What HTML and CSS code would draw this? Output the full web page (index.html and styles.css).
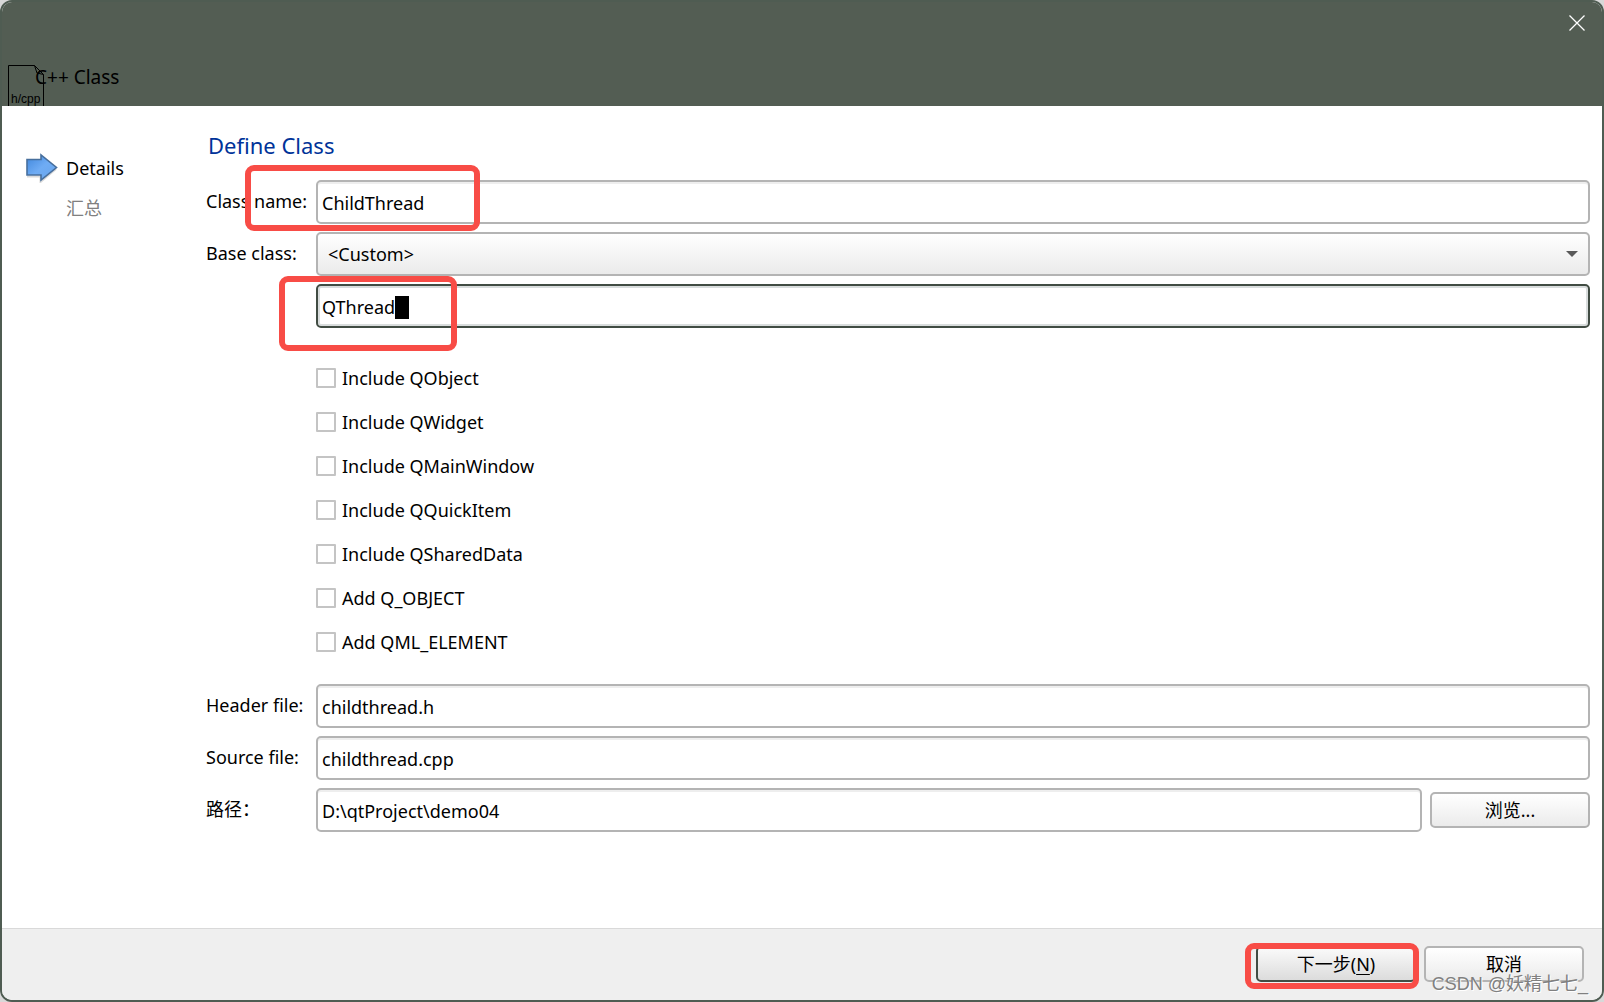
FILE: index.html
```html
<!DOCTYPE html>
<html lang="zh-CN">
<head>
<meta charset="utf-8">
<title>C++ Class</title>
<link rel="stylesheet" href="styles.css">
</head>
<body>
<div class="window">
  <header class="titlebar">
    <div class="brand">
      <svg class="file-icon" width="36" height="41" viewBox="0 0 36 41" fill="none" stroke="#000" aria-hidden="true">
        <path d="M0.5 41V0.5H26.5L35.5 9.5V41M26.5 0.5L29 8L35.5 9.5"/>
        <text class="file-text" x="3" y="38">h/cpp</text>
      </svg>
      <h1 class="title">C++ Class</h1>
    </div>
    <button class="close" type="button" aria-label="Close">
      <svg width="16" height="16" viewBox="0 0 16 16" fill="none" stroke="#fff" stroke-width="1.3"><path d="M0.5 0.5L15.500 15.500M15.500 0.500L0.500 15.500"/></svg>
    </button>
  </header>
  <div class="content">
    <nav class="steps">
      <div class="step">
        <svg width="32" height="30" viewBox="0 0 32 30" aria-hidden="true">
          <defs>
            <linearGradient id="arrow-fill" x1="0" y1="0" x2="1" y2="1"><stop offset="0" stop-color="#3f86dc"/><stop offset=".5" stop-color="#6facf4"/><stop offset="1" stop-color="#69a5ec"/></linearGradient>
          </defs>
          <path d="M1 23.500H14.500V29L30 16" fill="none" stroke="#dadada" stroke-width="2"/>
          <path d="M1 6.500H15V2L30.500 14.500L15 27V22H1Z" fill="url(#arrow-fill)" stroke="#476f9d" stroke-width="1.600"/>
        </svg>
        <span>Details</span>
      </div>
      <div class="step pending"><span>汇总</span></div>
    </nav>
    <main class="page">
      <h2 class="heading">Define Class</h2>
      <form class="form" id="class-form">
        <div class="row">
          <label for="class-name">Class name:</label>
          <input class="text" id="class-name" type="text" value="ChildThread">
          <span class="mark mark-name"></span>
        </div>
        <div class="row">
          <label for="base-class">Base class:</label>
          <div class="combo">
            <select id="base-class"><option>&lt;Custom&gt;</option></select>
            <svg class="chevron" width="12" height="6" viewBox="0 0 12 6"><path d="M0 0H12L6 6Z" fill="#595959"/></svg>
          </div>
        </div>
        <div class="row">
          <span></span>
          <input class="text active" type="text" value="QThread" aria-label="Custom base class">
          <span class="cursor"></span>
          <span class="mark mark-base"></span>
        </div>
        <div class="checks">
          <label><input type="checkbox">Include QObject</label>
          <label><input type="checkbox">Include QWidget</label>
          <label><input type="checkbox">Include QMainWindow</label>
          <label><input type="checkbox">Include QQuickItem</label>
          <label><input type="checkbox">Include QSharedData</label>
          <label><input type="checkbox">Add Q_OBJECT</label>
          <label><input type="checkbox">Add QML_ELEMENT</label>
        </div>
        <div class="row">
          <label for="header-file">Header file:</label>
          <input class="text" id="header-file" type="text" value="childthread.h">
        </div>
        <div class="row">
          <label for="source-file">Source file:</label>
          <input class="text" id="source-file" type="text" value="childthread.cpp">
        </div>
        <div class="row">
          <label for="path">路径：</label>
          <div class="path">
            <input class="text" id="path" type="text" value="D:\qtProject\demo04">
            <button class="button" type="button">浏览...</button>
          </div>
        </div>
      </form>
    </main>
  </div>
  <footer class="actions">
    <div class="next">
      <button class="button default" type="submit" form="class-form">下一步(<u>N</u>)</button>
      <span class="mark mark-next"></span>
    </div>
    <button class="button" type="button">取消</button>
    <span class="watermark">CSDN @妖精七七_</span>
  </footer>
</div>
</body>
</html>
```
FILE: styles.css
```css
* {
  box-sizing: border-box;
}

body {
  margin: 0;
  background: #d8d8d8;
  color: #000;
  font: 18px/24px "Noto Sans", "Noto Sans CJK SC", sans-serif;
}

input,
select,
button {
  margin: 0;
  color: inherit;
  font: inherit;
}

.window {
  display: flex;
  flex-direction: column;
  min-height: 100vh;
  overflow: hidden;
  border: 2px solid #4f5c52;
  border-radius: 12px;
  background: #fff;
}

.titlebar {
  display: flex;
  justify-content: space-between;
  align-items: flex-start;
  height: 104px;
  background: #535d53;
}

.brand {
  display: flex;
  align-self: flex-end;
  padding-left: 6px;
}

.file-icon {
  display: block;
}

.file-text {
  fill: #000;
  stroke: none;
  font-family: "Liberation Sans", sans-serif;
  font-size: 12px;
}

.title {
  margin: 0 0 0 -9px;
  font-size: 19px;
  font-weight: 400;
}

.close {
  display: grid;
  place-items: center;
  width: 50px;
  height: 42px;
  padding: 0;
  border: 0;
  background: none;
}

.content {
  display: flex;
  flex: 1;
}

.steps {
  display: flex;
  flex-direction: column;
  gap: 10px;
  width: 204px;
  padding: 47px 0 0 24px;
}

.step {
  display: flex;
  align-items: center;
  gap: 8px;
  height: 30px;
}

.pending {
  padding-left: 40px;
  color: #808080;
}

.page {
  flex: 1;
  padding: 23px 12px 0 0;
}

.heading {
  margin: 0 0 19px 2px;
  color: #003399;
  font-size: 22px;
  font-weight: 400;
  line-height: 32px;
}

.form {
  display: flex;
  flex-direction: column;
  gap: 8px;
}

.row {
  display: grid;
  grid-template-columns: 110px 1fr;
  position: relative;
}

.row > label {
  padding-top: 9px;
}

.text {
  width: 100%;
  height: 44px;
  padding: 2px 4px 0;
  border: 2px solid #b4b4b4;
  border-radius: 5px;
  outline: 0;
  background: #fff;
  box-shadow: inset 0 2px #eee;
}

.active {
  border-color: #414c43;
  box-shadow: inset 0 0 0 2px #d9dddd;
}

.cursor {
  position: absolute;
  top: 12px;
  left: 189px;
  width: 14px;
  height: 23px;
  background: #000;
}

.combo {
  position: relative;
}

.combo select {
  display: block;
  width: 100%;
  height: 44px;
  padding: 0 10px;
  border: 2px solid #b4b4b4;
  border-radius: 5px;
  appearance: none;
  background: linear-gradient(#fff, #ebebeb);
}

.chevron {
  position: absolute;
  top: 19px;
  right: 12px;
}

.checks {
  display: flex;
  flex-direction: column;
  gap: 20px;
  padding: 30px 0 22px 110px;
}

.checks label {
  display: flex;
  align-items: center;
  align-self: flex-start;
  gap: 6px;
}

.checks input {
  width: 20px;
  height: 20px;
  appearance: none;
  border: 2px solid #c4c4c4;
  border-radius: 1px;
  background: #fff;
}

.path {
  display: flex;
  align-items: flex-start;
  gap: 8px;
}

.path .button {
  margin-top: 4px;
}

.button {
  flex: none;
  width: 160px;
  height: 36px;
  padding: 0;
  border: 2px solid #b4b4b4;
  border-radius: 5px;
  background: linear-gradient(#fff, #ebebeb);
}

.default {
  border-color: #414c43;
  background: linear-gradient(#fafafa, #dcdcdc);
}

u {
  text-underline-offset: 3px;
}

.actions {
  display: flex;
  justify-content: flex-end;
  gap: 8px;
  position: relative;
  height: 72px;
  padding: 17px 18px 0;
  border-top: 1px solid #d9d9d9;
  background: #efefef;
}

.next {
  position: relative;
}

.mark {
  position: absolute;
  border: 6px solid #f84c46;
  border-radius: 9px;
  pointer-events: none;
}

.mark-name {
  top: -15px;
  left: 39px;
  width: 235px;
  height: 66px;
}

.mark-base {
  top: -8px;
  left: 73px;
  width: 178px;
  height: 75px;
}

.mark-next {
  top: -3px;
  left: -11px;
  width: 174px;
  height: 46px;
}

.watermark {
  position: absolute;
  right: 14px;
  bottom: 4px;
  color: #808080;
  font-family: "Liberation Sans", "Noto Sans CJK SC", sans-serif;
  text-shadow: 1px 1px #fff;
}
```
